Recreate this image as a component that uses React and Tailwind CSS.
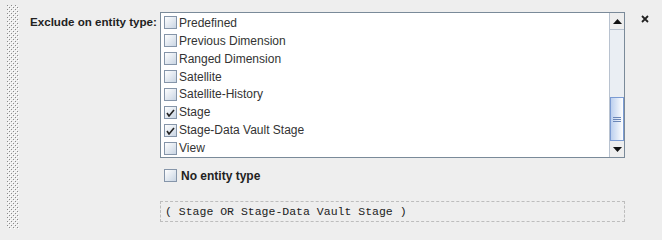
import React from 'react';

const types = [
  { name: 'Predefined', checked: false },
  { name: 'Previous Dimension', checked: false },
  { name: 'Ranged Dimension', checked: false },
  { name: 'Satellite', checked: false },
  { name: 'Satellite-History', checked: false },
  { name: 'Stage', checked: true },
  { name: 'Stage-Data Vault Stage', checked: true },
  { name: 'View', checked: false },
];

const CheckBox = ({ checked }) => (
  <span className="flex h-[13px] w-[13px] shrink-0 items-center justify-center border border-[#8595a9] bg-gradient-to-br from-[#ffffff] to-[#c9d5e3]">
    {checked && (
      <svg width="9" height="9" viewBox="0 0 9 9">
        <path d="M1 5 L3 8 L8 2" fill="none" stroke="#222" strokeWidth="1.6" />
      </svg>
    )}
  </span>
);

const DottedStrip = () => (
  <svg width="12" height="224" className="ml-[7px] mt-[5px] shrink-0">
    <defs>
      <pattern id="dots" width="4" height="4" patternUnits="userSpaceOnUse">
        <rect x="0" y="0" width="1" height="1" fill="#8a8a8a" />
        <rect x="2" y="2" width="1" height="1" fill="#8a8a8a" />
        <rect x="1" y="1" width="1" height="1" fill="#ffffff" />
        <rect x="3" y="3" width="1" height="1" fill="#ffffff" />
      </pattern>
    </defs>
    <rect width="12" height="224" fill="url(#dots)" />
  </svg>
);

const ScrollBar = () => (
  <div className="flex w-[15px] shrink-0 flex-col border-l border-[#b8c2cf] bg-[#eeeeee]">
    <div className="flex h-[17px] items-center justify-center border-b border-[#b8c2cf]">
      <svg width="9" height="5" viewBox="0 0 9 5">
        <path d="M0 5 L4.5 0 L9 5 Z" fill="#111" />
      </svg>
    </div>
    <div className="h-[67px] bg-[#eaeef3]" />
    <div className="flex h-[44px] items-center justify-center border border-[#7b9bd3] bg-gradient-to-r from-[#bcd0ef] via-[#dde7f6] to-[#ffffff]">
      <div className="flex flex-col gap-[1px]">
        <div className="h-[1px] w-[8px] bg-[#6b87b8]" />
        <div className="h-[1px] w-[8px] bg-[#6b87b8]" />
        <div className="h-[1px] w-[8px] bg-[#6b87b8]" />
      </div>
    </div>
    <div className="flex flex-1 items-center justify-center">
      <svg width="9" height="5" viewBox="0 0 9 5">
        <path d="M0 0 L4.5 5 L9 0 Z" fill="#111" />
      </svg>
    </div>
  </div>
);

export default function App() {
  return (
    <div className="flex h-[240px] w-[662px] bg-[#eeeeee] font-['Liberation_Sans',Arial,sans-serif] text-[12px] leading-[14px] text-[#333333]">
      <DottedStrip />
      <div className="ml-[11px] w-[130px] shrink-0 whitespace-nowrap pt-[15px] text-[11.6px] font-bold text-[#222222]">
        Exclude on entity type:
      </div>
      <div className="mt-[12px] flex w-[465px] shrink-0 flex-col">
        <div className="flex h-[146px] border border-[#7a8a99] bg-white">
          <div className="flex flex-1 flex-col pt-[1px]">
            {types.map((t) => (
              <div key={t.name} className="flex h-[18px] items-center gap-[2px] pl-[3px]">
                <CheckBox checked={t.checked} />
                <span>{t.name}</span>
              </div>
            ))}
          </div>
          <ScrollBar />
        </div>
        <div className="mt-[10px] flex h-[15px] items-center gap-[4px] pl-[4px] font-bold text-[#222222]">
          <CheckBox checked={false} />
          <span>No entity type</span>
        </div>
        <div className="mt-[18px] flex h-[21px] items-center border border-dashed border-[#bdbdbd] pl-[4px] font-['Liberation_Mono','Courier_New',monospace] text-[11.5px] text-[#222222]">
          ( Stage OR Stage-Data Vault Stage )
        </div>
      </div>
      <div className="ml-[16px] mt-[15px]">
        <svg width="8" height="8" viewBox="0 0 8 8">
          <path d="M1 1 L7 7 M7 1 L1 7" stroke="#222" strokeWidth="1.8" />
        </svg>
      </div>
    </div>
  );
}
